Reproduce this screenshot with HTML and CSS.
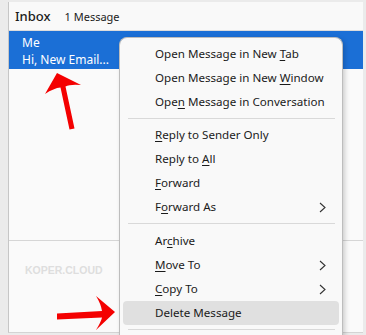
FILE: index.html
```html
<!DOCTYPE html>
<html lang="en">
<head>
  <meta charset="UTF-8" />
  <title>Inbox - Context Menu</title>
  <link rel="stylesheet" href="styles.css">
</head>
<body>

  <div class="window">
    <!-- Thread pane header -->
    <div class="header">
      <span class="folder">Inbox</span>
      <span class="count">1 Message</span>
    </div>

    <!-- Message list -->
    <div class="threads">
      <div class="row selected">
        <div>Me</div>
        <div>Hi, New Email...</div>
      </div>
    </div>

    <!-- Preview pane -->
    <div class="preview">
      <span class="watermark">KOPER.CLOUD</span>
    </div>
  </div>

  <!-- Context menu -->
  <div class="menu">
    <div class="item">Open Message in New <u>T</u>ab</div>
    <div class="item">Open Message in New <u>W</u>indow</div>
    <div class="item">Ope<u>n</u> Message in Conversation</div>
    <div class="sep"></div>
    <div class="item"><u>R</u>eply to Sender Only</div>
    <div class="item">Reply to <u>A</u>ll</div>
    <div class="item"><u>F</u>orward</div>
    <div class="item sub">F<u>o</u>rward As
      <svg class="chev" width="7" height="11" viewBox="0 0 7 11"><path d="M1 1 L6 5.5 L1 10" fill="none" stroke="#333" stroke-width="1.1"/></svg>
    </div>
    <div class="sep wide"></div>
    <div class="item">Ar<u>c</u>hive</div>
    <div class="item sub"><u>M</u>ove To
      <svg class="chev" width="7" height="11" viewBox="0 0 7 11"><path d="M1 1 L6 5.5 L1 10" fill="none" stroke="#333" stroke-width="1.1"/></svg>
    </div>
    <div class="item sub"><u>C</u>opy To
      <svg class="chev" width="7" height="11" viewBox="0 0 7 11"><path d="M1 1 L6 5.5 L1 10" fill="none" stroke="#333" stroke-width="1.1"/></svg>
    </div>
    <div class="item hover">Delete Message</div>
    <div class="sep"></div>
  </div>

  <!-- Annotation arrows -->
  <svg class="arrows" width="366" height="335" viewBox="0 0 366 335">
    <path d="M57,73 L81,85 Q70,84 65.5,86.5 L74.5,128.5 L69.5,129.5 L60.5,87.5 Q54,88 45,94 Z" fill="#f40000"/>
    <path d="M115,312 L96,330 Q101,322 102,317.5 L57,319.5 L57,313.5 L102,311 Q101,304 96,296 Z" fill="#f40000"/>
  </svg>

</body>
</html>
```

FILE: styles.css
```css
body {
  margin: 0;
  width: 366px;
  height: 335px;
  background: #ebebeb;
  font-family: "Noto Sans", "Open Sans", sans-serif;
  color: #1b1b1b;
  position: relative;
  overflow: hidden;
}
.window {
  margin: 2px 3px 0 8px;
  height: 330px;
  border-left: 1px solid #c6c6c6;
  border-bottom: 1px solid #d4d4d4;
  background: #fafafa;
  display: flex;
  flex-direction: column;
}
.header {
  height: 28px;
  border-bottom: 1px solid #dcdcdc;
  display: flex;
  align-items: center;
  padding-left: 6px;
  background: #f9f9f9;
}
.folder {
  font-size: 13px;
  font-weight: 500;
  margin-right: 14px;
}
.count {
  font-size: 11px;
}
.threads {
  height: 209px;
  border-bottom: 1px solid #d6d6d6;
}
.row {
  height: 38px;
  padding: 3px 0 0 13px;
  box-sizing: border-box;
  font-size: 12px;
  line-height: 17px;
}
.selected {
  background: #1b6fd6;
  color: #fff;
}
.preview {
  flex: 1;
  padding: 16px 0 0 16px;
}
.watermark {
  font-family: "Liberation Sans", Arial, sans-serif;
  font-weight: bold;
  font-size: 10.5px;
  color: #dedede;
}
.menu {
  position: absolute;
  left: 119px;
  top: 37px;
  width: 222px;
  height: 294px;
  padding-top: 4px;
  background: #f9f9f9;
  border: 1px solid #bdbdbd;
  border-bottom: none;
  border-radius: 8px 8px 0 0;
  box-shadow: 2px 2px 5px rgba(0,0,0,0.18);
  font-size: 11.6px;
}
.item {
  height: 24px;
  line-height: 24px;
  margin: 0 3px;
  padding-left: 32px;
  border-radius: 4px;
  position: relative;
  white-space: nowrap;
}
.item u {
  text-decoration-thickness: 1px;
  text-underline-offset: 2px;
}
.chev {
  position: absolute;
  right: 13px;
  top: 7px;
}
.hover {
  background: #e0e0e0;
}
.sep {
  height: 1px;
  background: #d9d9d9;
  margin: 4px 7px 4px 8px;
}
.sep.wide {
  margin-bottom: 5px;
}
.arrows {
  position: absolute;
  left: 0;
  top: 0;
  pointer-events: none;
}
```
